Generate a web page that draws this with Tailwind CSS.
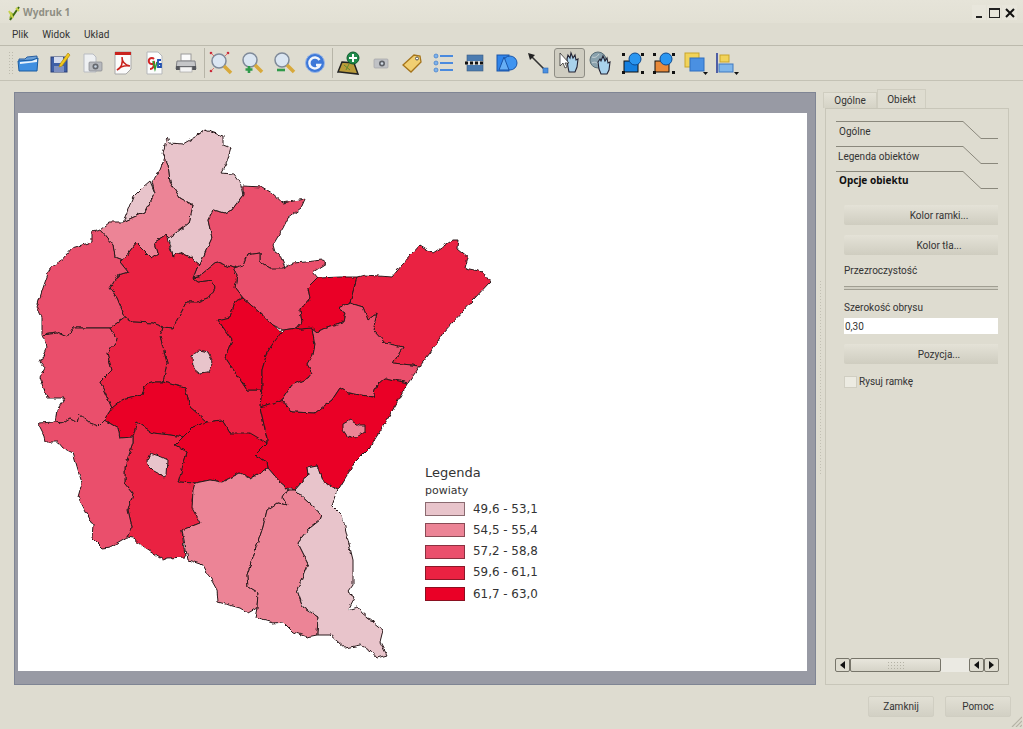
<!DOCTYPE html>
<html><head><meta charset="utf-8"><script src="https://cdn.jsdelivr.net/npm/@tailwindcss/browser@4"></script></head>
<body class="m-0">
<div class="w-[1023px] h-[729px] overflow-hidden flex flex-col bg-[#dedcd0] text-[#222] text-[10px] font-['Roboto',sans-serif] relative">
 <!-- title -->
 <div class="h-[23px] shrink-0 flex items-center pl-[7px] pr-[6px] pt-[2px] bg-gradient-to-b from-[#e6e4d9] to-[#e2e0d4]">
  <svg width="14" height="16" viewBox="0 0 14 16"><path d="M2 14 L4 7 L7 9 Z" fill="#9ab83a"/><path d="M3 15 L12 2" stroke="#3a6a10" stroke-width="2"/><path d="M2 6 L6 13 M9 3l3 3" stroke="#c7d24a" stroke-width="2"/></svg>
  <span class="ml-[2px] font-bold text-[#8f8f84] text-[10px] font-['Noto_Sans',sans-serif]">Wydruk 1</span>
  <div class="ml-auto flex gap-[1px]">
   <div class="w-[14px] h-[15px] bg-[#e8e6dc] flex items-end justify-center pb-[2px]"><div class="w-[6px] h-[2px] bg-[#222]"></div></div>
   <div class="w-[14px] h-[15px] bg-[#e8e6dc] flex items-center justify-center"><div class="w-[11px] h-[10px] border border-t-2 border-[#222]"></div></div>
   <div class="w-[15px] h-[15px] bg-[#e8e6dc] flex items-center justify-center"><svg width="10" height="10" viewBox="0 0 10 10"><path d="M1 1l8 8M9 1l-8 8" stroke="#111" stroke-width="2"/></svg></div>
  </div>
 </div>
 <!-- menu -->
 <div class="h-[23px] shrink-0 flex items-center gap-[14px] pl-[12px] border-b border-[#bcbaad] text-[#333]">
  <span>Plik</span><span>Widok</span><span>Układ</span>
 </div>
 <!-- toolbar -->
 <div class="h-[35px] shrink-0 flex items-center border-b border-[#c4c2b5] pl-[8px]">
  <div class="w-[6px] h-[24px] mr-[-2px] bg-[radial-gradient(#bdbbae_1px,transparent_1px)] bg-[length:3px_3px]"></div>
  <div class="flex items-center h-[30px]">
   <!-- open --><div class="w-[32px] flex justify-center"><svg width="22" height="22" viewBox="0 0 22 22"><path d="M2 7h6l2-2 10-1v6H2z" fill="#6aa0d8" stroke="#2a5f9f"/><path d="M1 9l14-1 6-2-1 13H2z" fill="#3f8fe0" stroke="#1c5ca0"/><path d="M3 10l12-1 5-2v3l-17 2z" fill="#e9f3fb"/></svg></div>
   <!-- save --><div class="w-[31px] flex justify-center"><svg width="22" height="22" viewBox="0 0 22 22"><rect x="2" y="5" width="16" height="15" fill="#3e5fa6" stroke="#2b3f78"/><rect x="5" y="5" width="9" height="6" fill="#d5dcec"/><rect x="5" y="14" width="10" height="6" fill="#7d8fc0"/><path d="M19 1l2 2-8 11-3 1 1-3z" fill="#f2c81c" stroke="#b08a10" stroke-width=".7"/></svg></div>
   <!-- doc cam --><div class="w-[33px] flex justify-center"><svg width="22" height="22" viewBox="0 0 22 22"><path d="M3 2h9l3 3v15H3z" fill="#eef0f2" stroke="#b9bcc2"/><rect x="8" y="10" width="13" height="9" rx="1" fill="#b7b9bd" stroke="#85878c" stroke-width=".7"/><circle cx="14.500" cy="14.500" r="3" fill="#65686e"/><circle cx="14.500" cy="14.500" r="1.300" fill="#c5d2e0"/></svg></div>
   <!-- pdf --><div class="w-[30px] flex justify-center"><svg width="22" height="24" viewBox="0 0 22 24"><path d="M3 1h16v17l-5 5H3z" fill="#fbfbfb" stroke="#a8a8a8"/><path d="M3 1h16v3H3z" fill="#c9221d"/><path d="M5 19c4-2 6-7 5-13 0 5 3 8 8 9-5-1-9 0-13 4z" fill="none" stroke="#c9221d" stroke-width="1.500"/></svg></div>
   <!-- svg --><div class="w-[31px] flex justify-center"><svg width="20" height="24" viewBox="0 0 20 24"><path d="M3 1h11l4 4v18H3z" fill="#fbfcfc" stroke="#b5b7ba"/><path d="M10 8a3 3 0 1 0 0 4c0 3-1 6-4 6" fill="none" stroke="#d22525" stroke-width="2"/><path d="M9 10l2 8 2-7" fill="none" stroke="#2f9a2f" stroke-width="1.600"/><path d="M17 9h-3v7h3v-3h-2" fill="none" stroke="#1f4fb0" stroke-width="1.800"/></svg></div>
   <!-- print --><div class="w-[33px] flex justify-center"><svg width="22" height="22" viewBox="0 0 22 22"><rect x="6" y="2" width="10" height="7" fill="#fafafa" stroke="#9a9a9a"/><path d="M2 9h18l1 8H1z" fill="#c5c6c8" stroke="#808185"/><rect x="1" y="14" width="20" height="4" fill="#55575c"/><rect x="5" y="15" width="12" height="5" fill="#f4f4f4" stroke="#999" stroke-width=".6"/></svg></div>
   <div class="w-[1px] h-[30px] bg-[#b7b5a8] ml-[2px]"></div>
   <!-- zoom full --><div class="w-[31px] flex justify-center"><svg width="24" height="24" viewBox="0 0 24 24"><circle cx="10" cy="10" r="7" fill="#dbe6f2" stroke="#7f8a99" stroke-width="1.500"/><path d="M15 15l7 7" stroke="#d8a93b" stroke-width="3.500"/><g fill="#c8283a"><circle cx="2" cy="2" r="1.300"/><circle cx="19" cy="2" r="1.300"/><circle cx="2" cy="20" r="1.300"/></g><path d="M2 2l3 3M19 2l-3 3M2 20l3-3" stroke="#d44" stroke-width=".7"/></svg></div>
   <!-- zoom in --><div class="w-[32px] flex justify-center"><svg width="24" height="24" viewBox="0 0 24 24"><circle cx="10" cy="9" r="7" fill="#dbe6f2" stroke="#7f8a99" stroke-width="1.500"/><path d="M15 14l7 7" stroke="#d8a93b" stroke-width="3.500"/><path d="M9 15v7M5.500 18.500h7" stroke="#2f9a4a" stroke-width="2.600"/></svg></div>
   <!-- zoom out --><div class="w-[31px] flex justify-center"><svg width="24" height="24" viewBox="0 0 24 24"><circle cx="10" cy="9" r="7" fill="#dbe6f2" stroke="#7f8a99" stroke-width="1.500"/><path d="M15 14l7 7" stroke="#d8a93b" stroke-width="3.500"/><path d="M5 19h8" stroke="#2f9a4a" stroke-width="2.600"/></svg></div>
   <!-- refresh --><div class="w-[32px] flex justify-center"><svg width="22" height="22" viewBox="0 0 22 22"><circle cx="11" cy="11" r="9.500" fill="#3d78d8" stroke="#9ab7e6"/><path d="M15.500 8a5.500 5.500 0 1 0 .5 5h-4" fill="none" stroke="#f2f6fc" stroke-width="2.400"/></svg></div>
   <div class="w-[1px] h-[30px] bg-[#b7b5a8] ml-[1px]"></div>
   <!-- add map --><div class="w-[32px] flex justify-center"><svg width="24" height="24" viewBox="0 0 24 24"><path d="M5 11l12 1 4 11-18-2-2 0z" fill="#b99b3a" stroke="#222" stroke-width="1.500"/><path d="M7 14l6 5M12 13l-3 6" stroke="#5f8a30"/><circle cx="16" cy="7" r="6" fill="#1f8a4a" stroke="#0e5c2e"/><path d="M16 3v8M12 7h8" stroke="#fff" stroke-width="2"/></svg></div>
   <!-- image --><div class="w-[31px] flex justify-center"><svg width="16" height="12" viewBox="0 0 16 12"><rect x="1" y="2" width="14" height="9" rx="1" fill="#c0c2c5" stroke="#a3a5a8" stroke-width=".7"/><circle cx="9" cy="6.500" r="3" fill="#5e6268"/><circle cx="9" cy="6.500" r="1.300" fill="#d2dce6"/></svg></div>
   <!-- label --><div class="w-[32px] flex justify-center"><svg width="22" height="22" viewBox="0 0 22 22"><path d="M2 13L13 3l6 1 1 6-10 10z" fill="#f1cf72" stroke="#a5741a" stroke-width="1.300"/><circle cx="16" cy="6.500" r="1.500" fill="#fff" stroke="#555"/></svg></div>
   <!-- legend --><div class="w-[31px] flex justify-center"><svg width="22" height="22" viewBox="0 0 22 22"><g fill="#7fb2ea" stroke="#3f7ccc" stroke-width=".7"><circle cx="3" cy="4" r="2"/><circle cx="3" cy="11" r="2"/><circle cx="3" cy="18" r="2"/></g><path d="M7 4h13M7 11h13M7 18h13" stroke="#4a8ade" stroke-width="2.200"/></svg></div>
   <!-- scale --><div class="w-[32px] flex justify-center"><svg width="20" height="20" viewBox="0 0 20 20"><rect x="2" y="2" width="16" height="16" fill="#4b7bb0" stroke="#3a5a80" stroke-width=".6"/><rect x="2" y="8" width="16" height="4" fill="#ddd"/><path d="M0 10h20" stroke="#111" stroke-width="3" stroke-dasharray="3 2"/></svg></div>
   <!-- shape --><div class="w-[31px] flex justify-center"><svg width="22" height="20" viewBox="0 0 22 20"><rect x="1" y="2" width="12" height="16" fill="#2f84ea" stroke="#1a55a8"/><circle cx="14" cy="10" r="7" fill="#3f94f0" stroke="#1a55a8"/><path d="M8 4l5 13H3z" fill="#66aef5" stroke="#1a55a8"/></svg></div>
   <!-- arrow --><div class="w-[32px] flex justify-center"><svg width="22" height="22" viewBox="0 0 22 22"><path d="M3 3l15 15" stroke="#333" stroke-width="1.600"/><path d="M1 1l7 2-5 5z" fill="#222"/><rect x="16" y="16" width="5" height="5" fill="#4a90e2" stroke="#2a66b0" stroke-width=".6"/></svg></div>
   <!-- select active --><div class="w-[31px] h-[30px] flex justify-center items-center bg-[#cfcdc1] border border-[#8f8e85] rounded-[3px]"><svg width="22" height="24" viewBox="0 0 22 24"><path d="M8 8l1-4 2 3 1-5 2 5 2-3 1 5 2-1-1 8-2 5H10l-1-5z" fill="#a9d2ec" stroke="#223" stroke-width="1.100"/><path d="M1 2v13l3-3 2 5 2-1-2-4h4z" fill="#fff" stroke="#333" stroke-width=".8"/></svg></div>
   <!-- move content --><div class="w-[32px] flex justify-center"><svg width="24" height="24" viewBox="0 0 24 24"><circle cx="9" cy="9" r="8" fill="#8aa2ad" stroke="#5b6f78"/><path d="M3 6c3 1 5 0 7-3M3 12c3-2 6 0 7 3" stroke="#c8d2d6" fill="none"/><path d="M9 11l2-3 1 2 2-5 2 5 2-3 1 5 2-1-1 8-2 4h-6l-2-5z" fill="#a9d2ec" stroke="#223" stroke-width="1.100"/></svg></div>
   <!-- group --><div class="w-[31px] flex justify-center"><svg width="24" height="24" viewBox="0 0 24 24"><rect x="3" y="10" width="14" height="11" fill="#1580e0" stroke="#111"/><circle cx="14" cy="8" r="6" fill="#2a96f0" stroke="#0d4a90"/><g fill="#111"><rect x="1" y="2" width="3" height="3"/><rect x="20" y="2" width="3" height="3"/><rect x="1" y="20" width="3" height="3"/><rect x="20" y="20" width="3" height="3"/></g></svg></div>
   <!-- ungroup --><div class="w-[32px] flex justify-center"><svg width="24" height="24" viewBox="0 0 24 24"><rect x="3" y="10" width="14" height="11" fill="#e98a3a" stroke="#111"/><circle cx="14" cy="8" r="6" fill="#2a96f0" stroke="#0d4a90"/><g fill="#111"><rect x="1" y="2" width="3" height="3"/><rect x="20" y="2" width="3" height="3"/><rect x="1" y="20" width="3" height="3"/><rect x="20" y="20" width="3" height="3"/></g></svg></div>
   <!-- raise --><div class="w-[31px] flex justify-center"><svg width="24" height="24" viewBox="0 0 24 24"><rect x="1" y="2" width="14" height="14" fill="#f1d35a" stroke="#c9a52a"/><rect x="6" y="7" width="14" height="13" fill="#4a90e2" stroke="#2f6fc0"/><path d="M19 21h5l-2.500 3z" fill="#111"/></svg></div>
   <!-- align --><div class="w-[32px] flex justify-center"><svg width="24" height="24" viewBox="0 0 24 24"><path d="M2 2v20" stroke="#2b3f9a" stroke-width="1.600"/><rect x="5" y="4" width="9" height="7" fill="#f1d35a" stroke="#c9a52a"/><rect x="4" y="13" width="14" height="8" fill="#7fb6ea" stroke="#3f78c0"/><path d="M19 21h5l-2.500 3z" fill="#111"/></svg></div>
  </div>
 </div>
 <!-- main -->
 <div class="flex-1 min-h-0 flex pl-[14px] pr-[13px]">
  <!-- canvas -->
  <div class="w-[802px] mt-[11px] mb-[9px] bg-[#989aa4] border border-[#7f8594] pt-[20px] pl-[3px] pr-[7px] pb-[13px]">
   <div class="relative w-[789px] h-[558px] bg-white overflow-hidden">
    <svg class="absolute left-0 top-0" width="789" height="558" viewBox="18 113 789 558">
     <defs><filter id="jag" x="18" y="113" width="789" height="558" filterUnits="userSpaceOnUse" color-interpolation-filters="sRGB"><feTurbulence type="fractalNoise" baseFrequency="0.17" numOctaves="2" seed="4"/><feDisplacementMap in="SourceGraphic" scale="4" xChannelSelector="R" yChannelSelector="G"/></filter></defs>
     <g filter="url(#jag)" stroke="#2a1a1c" stroke-width="1" stroke-linejoin="round">
      <polygon fill="#e8c4cb" points="167,137 169,143 183,144 195,137 205,130 223,136 223,145 231,148 227,162 221,173 234,174 240,182 243,195 237,203 232,210 225,213 213,210 208,220 212,238 205,253 200,265 190,257 180,252 173,257 169,238 177,232 189,223 193,205 180,198 170,182 168,165 163,153"/>
      <polygon fill="#e8c4cb" points="150,181 155,193 145,212 123,222 133,197 143,187"/>
      <polygon fill="#ec8496" points="165,157 168,165 170,182 180,198 193,205 189,223 177,232 169,238 166,235 155,242 158,253 151,258 136,243 123,260 115,257 113,245 100,230 110,222 123,222 145,212 155,193 152,182 160,170"/>
      <polygon fill="#ea4f6c" points="243,186 262,187 272,193 283,203 305,199 301,208 288,218 283,228 280,233 273,245 275,252 280,255 285,268 277,270 270,268 260,262 260,253 247,255 243,265 233,268 217,262 198,277 193,278 197,268 200,265 205,253 212,238 208,220 213,210 225,213 232,210 237,203 243,195"/>
      <polygon fill="#ea4f6c" points="233,268 243,265 247,255 260,253 260,262 270,268 283,268 293,263 305,262 323,260 327,263 313,272 318,278 308,288 310,298 300,310 302,322 297,328 283,330 273,325 260,313 243,298 235,288 237,275"/>
      <polygon fill="#ea2242" points="136,243 151,258 158,253 155,242 166,235 173,257 180,252 190,257 200,265 197,268 193,278 198,282 212,280 215,288 210,297 197,302 187,302 177,320 173,328 163,327 153,323 133,322 125,317 117,298 110,288 118,275 128,272 120,262 123,260"/>
      <polygon fill="#ea2242" points="193,278 198,277 217,262 233,268 237,275 235,288 243,298 235,302 230,317 218,320 232,340 225,357 247,390 262,390 260,407 267,438 267,443 247,435 230,433 222,420 207,422 190,407 185,388 163,382 167,363 160,337 163,327 173,328 177,320 187,302 197,302 210,297 215,288 212,280 198,282"/>
      <polygon fill="#ea0026" points="218,320 230,317 235,302 243,298 260,313 273,325 283,333 272,345 267,353 262,370 262,390 247,390 225,357 232,340"/>
      <polygon fill="#ea0026" points="283,330 297,328 300,329 312,328 315,345 313,355 307,365 312,373 308,378 292,385 282,400 260,407 262,390 262,370 267,353 272,345"/>
      <polygon fill="#ea0026" points="318,278 340,277 357,277 350,303 338,308 345,313 343,322 327,327 317,332 312,328 300,329 297,328 302,322 300,310 310,298 308,288"/>
      <polygon fill="#ea2242" points="357,277 365,275 392,277 402,265 420,245 433,253 453,240 458,240 457,248 468,257 465,268 483,272 490,282 473,300 443,333 430,353 420,366 393,363 403,347 385,343 373,330 377,313 368,320 363,307 350,303"/>
      <polygon fill="#ea4f6c" points="338,308 350,303 363,307 368,320 377,313 373,330 385,343 403,347 393,363 420,366 408,383 385,378 377,385 373,397 348,393 340,388 332,400 315,413 292,412 282,400 292,385 308,378 312,373 307,365 313,355 315,345 312,328 317,332 327,327 343,322 345,313"/>
      <polygon fill="#ea0026" points="408,383 387,420 370,447 355,462 338,490 322,480 317,465 307,467 308,475 295,490 287,488 280,482 268,468 267,462 255,455 267,443 267,438 260,407 282,400 292,412 315,413 332,400 340,388 348,393 373,397 377,385 385,378"/>
      <polygon fill="#ea4f6c" points="92,232 100,230 113,245 115,257 123,260 120,262 128,272 118,275 110,288 117,298 125,317 117,323 110,328 73,328 67,337 58,333 42,335 42,317 37,307 43,288 50,268 60,262 72,248 92,242"/>
      <polygon fill="#ea4f6c" points="42,335 58,333 67,337 73,328 110,328 117,340 107,353 112,370 100,382 112,408 104,420 98,426 90,423 80,415 78,422 70,418 62,423 55,422 57,410 65,398 47,398 40,377 45,368 40,362 47,347"/>
      <polygon fill="#ea2242" points="110,328 117,323 125,317 133,322 153,323 163,327 160,337 167,363 163,382 155,382 145,385 142,395 122,400 112,408 100,382 112,370 107,353 117,340"/>
      <polygon fill="#ea0026" points="145,385 155,382 163,382 185,388 190,407 207,422 193,427 183,437 170,435 153,433 137,422 133,437 120,438 118,428 104,420 112,408 122,400 142,395"/>
      <polygon fill="#ea0026" points="207,422 222,420 230,433 250,433 267,443 255,455 267,462 268,468 250,478 240,473 222,482 210,480 195,483 178,482 187,452 175,445 183,437 193,427"/>
      <polygon fill="#ea2242" points="137,422 153,433 170,435 183,437 175,445 187,452 178,482 195,483 192,500 200,523 182,530 185,557 168,558 163,560 143,547 133,538 127,537 132,527 128,510 133,493 125,483 125,467 133,443 133,437"/>
      <polygon fill="#ea4f6c" points="38,423 55,422 62,423 70,418 78,422 80,415 90,423 98,426 104,420 118,428 120,438 133,437 133,443 125,467 125,483 133,493 128,510 132,527 127,537 110,547 102,548 92,538 93,525 78,497 82,483 73,453 63,448 58,442 45,442 43,433"/>
      <polygon fill="#ec8496" points="268,468 280,482 287,488 288,492 283,498 287,505 277,503 267,510 263,527 247,575 248,587 258,593 257,608 248,613 240,608 218,602 217,590 203,565 188,560 182,530 200,523 192,508 193,490 195,483 210,480 222,482 240,473 250,478"/>
      <polygon fill="#ec8496" points="288,490 295,490 322,515 320,520 310,528 298,543 308,563 297,590 303,607 318,617 317,635 307,637 293,632 283,622 273,623 255,618 257,608 258,593 248,587 247,575 263,527 267,510 277,503 287,505 283,498"/>
      <polygon fill="#e8c4cb" points="295,490 308,475 307,467 317,465 322,480 337,490 332,505 342,515 353,560 353,585 348,592 355,597 348,610 358,607 362,613 383,630 380,642 387,655 377,658 370,650 360,645 345,648 330,635 317,635 318,617 303,607 297,590 308,563 298,543 310,528 320,520 322,515"/>
      <polygon fill="#ec8496" points="343,424 350,420 358,425 365,425 365,432 355,438 347,436 343,430"/>
      <polygon fill="#e8c4cb" points="147,460 150,453 162,457 168,460 167,475 164,477 155,472 148,465"/>
      <polygon fill="#e8c4cb" points="192,357 200,350 208,352 213,362 208,372 200,373 193,367"/>
     </g>
    </svg>
    <!-- legend -->
    <div class="absolute left-[407px] top-[351px] w-[130px] text-[#333] font-['DejaVu_Sans',sans-serif]">
     <div class="text-[13px] leading-[18px]">Legenda</div>
     <div class="text-[11px] leading-[16px] mb-[3px] mt-[1px]">powiaty</div>
     <div class="flex flex-col gap-[7.300px] text-[11.900px] leading-[13px]">
      <div class="flex items-center gap-[8px] h-[14px]"><div class="w-[40px] h-[14px] bg-[#e8c4cb] border border-[#8a6a70]"></div><span>49,6 - 53,1</span></div>
      <div class="flex items-center gap-[8px] h-[14px]"><div class="w-[40px] h-[14px] bg-[#ec8496] border border-[#8a4a55]"></div><span>54,5 - 55,4</span></div>
      <div class="flex items-center gap-[8px] h-[14px]"><div class="w-[40px] h-[14px] bg-[#ea4f6c] border border-[#8a3040]"></div><span>57,2 - 58,8</span></div>
      <div class="flex items-center gap-[8px] h-[14px]"><div class="w-[40px] h-[14px] bg-[#ea2242] border border-[#8a1828]"></div><span>59,6 - 61,1</span></div>
      <div class="flex items-center gap-[8px] h-[14px]"><div class="w-[40px] h-[14px] bg-[#ea0026] border border-[#8a1020]"></div><span>61,7 - 63,0</span></div>
     </div>
    </div>
   </div>
  </div>
  <!-- splitter -->
  <div class="w-[8px] flex items-center justify-center"><div class="w-[3px] h-[195px] mt-[-20px] bg-[radial-gradient(#c2c0b3_1px,transparent_1px)] bg-[length:3px_3px]"></div></div>
  <!-- right -->
  <div class="w-[186px] flex flex-col pt-[8px] pb-[9px] pl-[1px] pr-[1px]">
   <div class="flex items-end h-[19px] -ml-[2px] relative">
    <div class="w-[54px] h-[16px] bg-gradient-to-b from-[#e4e2d7] to-[#d5d3c6] border border-b-0 border-[#cfcdc0] flex items-center justify-center text-[#333]">Ogólne</div>
    <div class="w-[49px] h-[19px] bg-[#dedcd0] border border-b-0 border-[#cfcdc0] flex items-center justify-center text-[#333]">Obiekt</div>
   </div>
   <div class="flex-1 min-h-0 border border-[#c8c6b9] pl-[10px] pr-[10px] relative overflow-hidden">
    <div class="relative h-[25px] mt-[12px]"><svg class="absolute left-0 top-0" width="164" height="20"><path d="M0 .5H127L145 17.500H162" fill="none" stroke="#8a887c"/></svg><div class="pl-[3px] pt-[3px] text-[#333]">Ogólne</div></div>
    <div class="relative h-[25px]"><svg class="absolute left-0 top-0" width="164" height="20"><path d="M0 .5H127L145 17.500H162" fill="none" stroke="#8a887c"/></svg><div class="pl-[2px] pt-[3px] text-[#333]">Legenda obiektów</div></div>
    <div class="relative h-[25px]"><svg class="absolute left-0 top-0" width="164" height="20"><path d="M0 .5H127L145 17.500H162" fill="none" stroke="#8a887c"/></svg><div class="pl-[3px] pt-[2px] font-bold text-[#111] font-['Noto_Sans',sans-serif]">Opcje obiektu</div></div>
    <div class="ml-[8px] w-[154px] overflow-hidden">
     <div class="mt-[9px] w-[190px] h-[20px] bg-gradient-to-b from-[#e4e2d7] to-[#cfcdc0] rounded-[2px] flex items-center justify-center text-[#333]">Kolor ramki...</div>
     <div class="mt-[10px] w-[190px] h-[20px] bg-gradient-to-b from-[#e4e2d7] to-[#cfcdc0] rounded-[2px] flex items-center justify-center text-[#333]">Kolor tła...</div>
     <div class="mt-[9px] h-[14px] leading-[14px] text-[#333]">Przezroczystość</div>
     <div class="mt-[8px] h-[4px] border-y border-[#a09e92] bg-[#d0cec2]"></div>
     <div class="mt-[11px] h-[14px] leading-[14px] text-[#333]">Szerokość obrysu</div>
     <div class="mt-[3px] h-[16px] bg-white flex items-center pl-[1px] text-[#333]">0,30</div>
     <div class="mt-[10px] w-[190px] h-[20px] bg-gradient-to-b from-[#e4e2d7] to-[#cfcdc0] rounded-[2px] flex items-center justify-center text-[#333]">Pozycja...</div>
     <div class="mt-[10px] flex items-center gap-[2px] text-[#333]"><div class="w-[13px] h-[12px] bg-[#ecebe2] border border-[#d0cec2]"></div><span>Rysuj ramkę</span></div>
    </div>
    <!-- scrollbar: pinned to the panel's lower edge -->
    <div class="absolute left-[9px] bottom-[12px] w-[164px] h-[14px] flex">
     <div class="w-[15px] h-[14px] bg-[#dedcd0] border border-[#77756a] rounded-[2px] flex items-center justify-center"><div class="border-y-[4px] border-r-[5px] border-y-transparent border-r-[#111]"></div></div>
     <div class="w-[91px] bg-gradient-to-b from-[#e8e6dc] to-[#d6d4c8] border border-[#77756a] rounded-[2px] flex items-center justify-center"><div class="w-[17px] h-[9px] bg-[radial-gradient(#b5b3a6_1px,transparent_1px)] bg-[length:3px_3px]"></div></div>
     <div class="w-[28px] bg-[#ebeae3]"></div>
     <div class="w-[15px] h-[14px] bg-[#dedcd0] border border-[#77756a] rounded-[2px] flex items-center justify-center"><div class="border-y-[4px] border-r-[5px] border-y-transparent border-r-[#111]"></div></div>
     <div class="w-[15px] h-[14px] bg-[#dedcd0] border border-[#77756a] rounded-[2px] flex items-center justify-center"><div class="border-y-[4px] border-l-[5px] border-y-transparent border-l-[#111]"></div></div>
    </div>
   </div>
  </div>
 </div>
 <!-- footer -->
 <div class="h-[35px] shrink-0 flex justify-end gap-[11px] pr-[12px] pt-[2px] text-[#333]">
  <div class="w-[66px] h-[21px] bg-gradient-to-b from-[#e2e0d5] to-[#d2d0c4] border border-[#d0cec2] rounded-[2px] flex items-center justify-center">Zamknij</div>
  <div class="w-[66px] h-[21px] bg-gradient-to-b from-[#e2e0d5] to-[#d2d0c4] border border-[#d0cec2] rounded-[2px] flex items-center justify-center">Pomoc</div>
 </div>
 <svg class="absolute right-[1px] bottom-[2px]" width="11" height="11" viewBox="0 0 11 11"><path d="M11 1L1 11M11 5L5 11M11 9L9 11" stroke="#b5b3a6" stroke-width="1.200"/></svg>
</div>
</body></html>
